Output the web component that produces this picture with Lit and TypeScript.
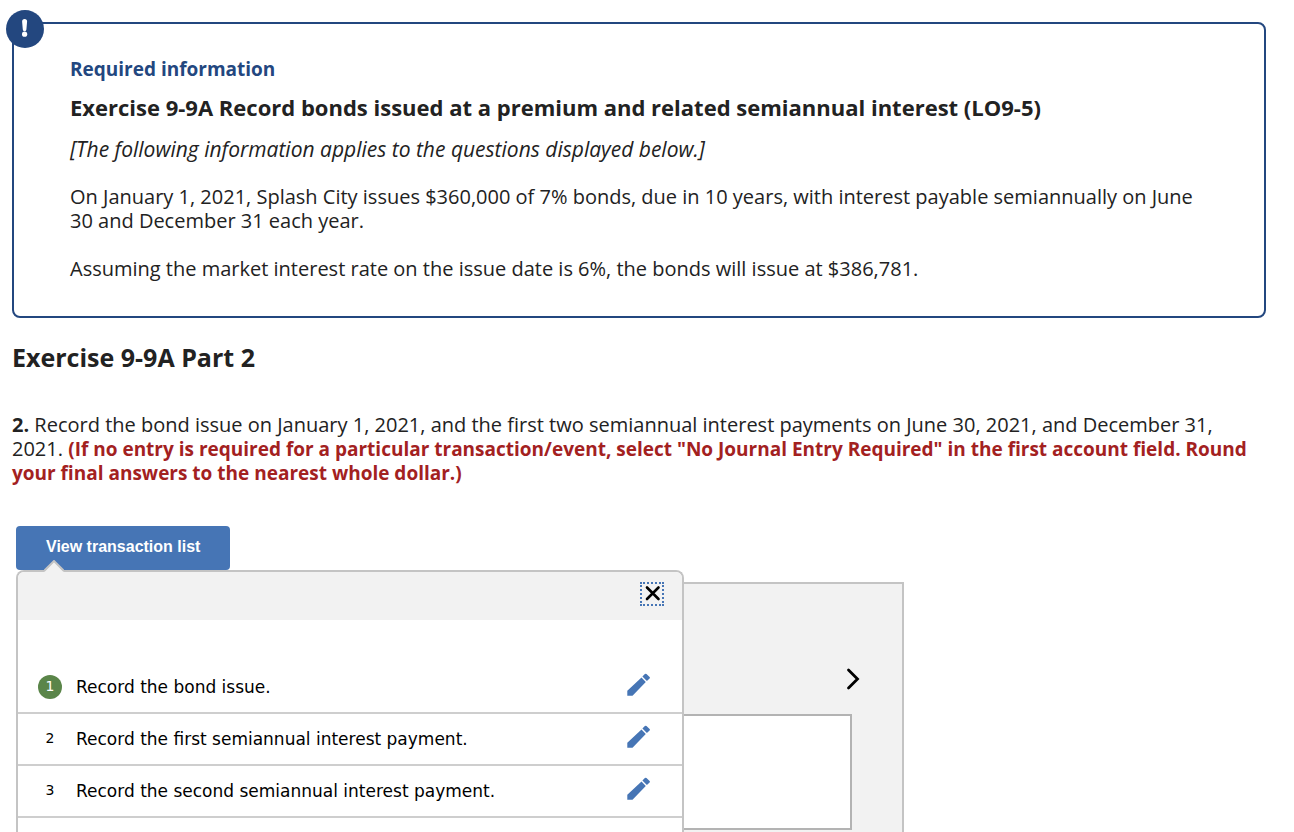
import { LitElement, html, css } from "lit";
import { customElement, property } from "lit/decorators.js";

interface Transaction {
  id: number;
  label: string;
}

const transactions: Transaction[] = [
  { id: 1, label: "Record the bond issue." },
  { id: 2, label: "Record the first semiannual interest payment." },
  { id: 3, label: "Record the second semiannual interest payment." },
];

@customElement("required-info")
class RequiredInfo extends LitElement {
  static styles = css`
    :host {
      display: block;
      position: relative;
      border: 2px solid #23477f;
      border-radius: 8px;
      padding: 33px 56px 35px;
    }
    .badge {
      position: absolute;
      top: -14px;
      left: -8px;
      width: 38px;
      height: 38px;
    }
    .kicker,
    .title,
    p {
      margin: 0;
      line-height: 24px;
    }
    .kicker {
      color: #23477f;
      font-size: 19px;
      font-weight: 700;
      margin-bottom: 14px;
    }
    .title {
      font-size: 22px;
      font-weight: 700;
      margin-bottom: 18px;
    }
    p {
      font-size: 20px;
      margin-bottom: 24px;
    }
    .intro {
      font-size: 21px;
    }
    p:last-child {
      margin-bottom: 0;
    }
  `;

  render() {
    return html`
      <svg class="badge" viewBox="0 0 38 38" role="img" aria-label="Important">
        <circle cx="19" cy="19" r="19" fill="#23477f" />
        <path d="M16.100 11.500a2.500 2.500 0 0 1 5 0l-.7 8a1.800 1.800 0 0 1-3.600 0z" fill="#fff" />
        <circle cx="18.6" cy="24.2" r="2.600" fill="#fff" />
      </svg>
      <h2 class="kicker">Required information</h2>
      <h3 class="title">Exercise 9-9A Record bonds issued at a premium and related semiannual interest (LO9-5)</h3>
      <p class="intro"><em>[The following information applies to the questions displayed below.]</em></p>
      <p>
        On January 1, 2021, Splash City issues $360,000 of 7% bonds, due in 10 years, with interest payable
        semiannually on June 30 and December 31 each year.
      </p>
      <p>Assuming the market interest rate on the issue date is 6%, the bonds will issue at $386,781.</p>
    `;
  }
}

@customElement("transaction-list")
class TransactionList extends LitElement {
  @property({ type: Number }) current = 1;

  static styles = css`
    :host {
      display: block;
      box-sizing: border-box;
      border: 2px solid #c4c4c4;
      border-radius: 8px 8px 0 0;
      background: #fff;
      color: #000;
      font-family: "DejaVu Sans", Verdana, sans-serif;
    }
    button {
      appearance: none;
      display: block;
      border: 0;
      padding: 0;
      background: none;
      cursor: pointer;
    }
    svg {
      display: block;
    }
    .pointer {
      position: absolute;
      left: 26px;
      top: -12px;
    }
    .bar {
      display: flex;
      justify-content: flex-end;
      background: #f2f2f2;
      border-radius: 6px 6px 0 0;
      padding: 10px 18px 14px;
    }
    .close {
      box-sizing: border-box;
      width: 24px;
      height: 24px;
      border: 2px dotted #4675b5;
    }
    ol {
      list-style: none;
      margin: 0;
      padding: 42px 0 0;
    }
    li {
      display: flex;
      align-items: center;
      height: 50px;
      padding: 0 28px 0 20px;
      border-bottom: 2px solid #cecece;
    }
    .number {
      width: 24px;
      line-height: 22px;
      padding-bottom: 2px;
      border-radius: 50%;
      text-align: center;
      font-size: 14px;
    }
    .number.on {
      background: #5a8549;
      color: #fff;
    }
    .label {
      flex: 1;
      padding-left: 14px;
      font-size: 17px;
    }
  `;

  render() {
    return html`
      <svg class="pointer" width="20" height="13" viewBox="0 0 20 13" aria-hidden="true">
        <path d="M0 12 10 1l10 11v1H0z" fill="#f2f2f2" />
        <path d="M0 11 10 1l10 10" fill="none" stroke="#c4c4c4" stroke-width="2" />
      </svg>
      <div class="bar">
        <button class="close" aria-label="Close">
          <svg width="20" height="20" viewBox="0 0 20 20">
            <path d="M5 3.5 16.5 15M16.5 3.5 5 15" fill="none" stroke="#000" stroke-width="2.6" stroke-linecap="round" />
          </svg>
        </button>
      </div>
      <ol>
        ${transactions.map(
          (t) => html`
            <li>
              <span class="number ${t.id === this.current ? "on" : ""}">${t.id}</span>
              <span class="label">${t.label}</span>
              <button aria-label="Edit transaction ${t.id}">
                <svg width="28" height="28" viewBox="0 0 28 28">
                  <path
                    d="M1.300 22.700V17.700L15.500 4.400 19.800 8.900 6.500 22.700zM16.400 3.400 18.900 1Q19.700.3 20.500 1L23.600 4Q24.400 4.800 23.600 5.500L20.900 8z"
                    fill="#4675b5"
                  />
                </svg>
              </button>
            </li>
          `,
        )}
      </ol>
    `;
  }
}

@customElement("app-root")
class AppRoot extends LitElement {
  static styles = css`
    :host {
      display: flex;
      flex-direction: column;
      box-sizing: border-box;
      height: 100vh;
      overflow: hidden;
      padding: 22px 28px 0 12px;
      background: #fff;
      color: #222;
      font-family: "Open Sans", sans-serif;
    }
    .part {
      margin: 23px 0 40px;
      font-size: 25px;
      line-height: 32px;
      font-weight: 700;
    }
    .question {
      margin: 0;
      font-size: 20px;
      line-height: 24px;
    }
    .note {
      color: #a3211f;
      font-size: 19px;
    }
    .work {
      flex: 1;
      display: flex;
      flex-direction: column;
      align-items: flex-start;
      position: relative;
      margin-top: 41px;
      padding-left: 4px;
    }
    .view {
      appearance: none;
      border: 0;
      border-radius: 4px;
      background: #4675b5;
      color: #fff;
      padding: 11px 30px 13px;
      font: 700 16px/20px "Liberation Sans", Arial, sans-serif;
      cursor: pointer;
    }
    .entry {
      flex: 1;
      display: flex;
      flex-direction: column;
      box-sizing: border-box;
      width: 888px;
      max-width: 100%;
      margin-top: 12px;
      border: 2px solid #c4c4c4;
      border-bottom: 0;
      background: #f2f2f2;
      padding: 83px 42px 0 50px;
    }
    .next {
      appearance: none;
      align-self: flex-end;
      border: 0;
      padding: 0;
      background: none;
      cursor: pointer;
    }
    .next svg {
      display: block;
    }
    .sheet {
      box-sizing: border-box;
      height: 116px;
      margin: 23px 8px 0 0;
      border: 2px solid #b3b3b3;
      background: #fff;
    }
    transaction-list {
      position: absolute;
      top: 44px;
      bottom: 0;
      left: 4px;
      width: 668px;
      border-bottom: 0;
    }
  `;

  render() {
    return html`
      <required-info></required-info>
      <h1 class="part">Exercise 9-9A Part 2</h1>
      <p class="question">
        <strong>2.</strong> Record the bond issue on January 1, 2021, and the first two semiannual interest payments
        on June 30, 2021, and December 31, 2021.
        <strong class="note"
          >(If no entry is required for a particular transaction/event, select "No Journal Entry Required" in the
          first account field. Round your final answers to the nearest whole dollar.)</strong
        >
      </p>
      <div class="work">
        <button class="view">View transaction list</button>
        <section class="entry">
          <button class="next" aria-label="Next transaction">
            <svg width="14" height="24" viewBox="0 0 14 24">
              <path d="M2.500 3 11.500 12 2.500 21" fill="none" stroke="#000" stroke-width="2.8" stroke-linecap="round" />
            </svg>
          </button>
          <div class="sheet"></div>
        </section>
        <transaction-list></transaction-list>
      </div>
    `;
  }
}
